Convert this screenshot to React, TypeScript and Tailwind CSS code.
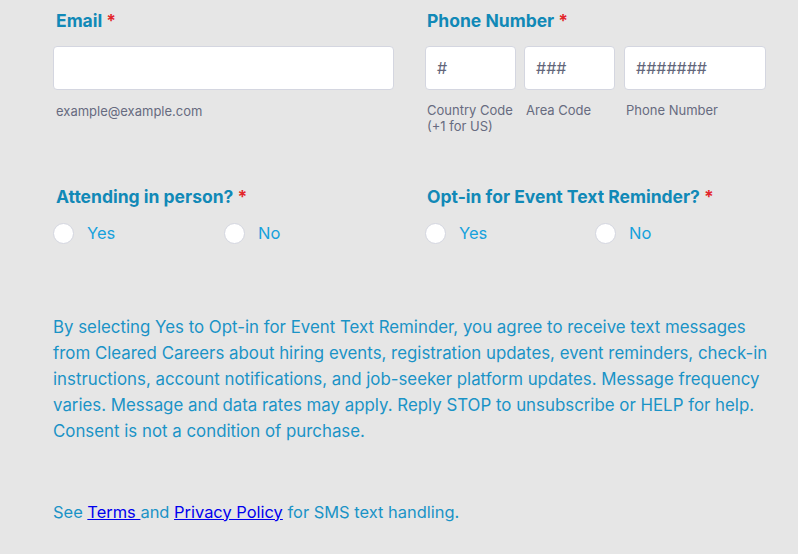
import React from "react";

const labelCls = "text-[17.5px] font-bold text-[#1189b7] leading-none";

function Req() {
    return <span className="text-[#e3262b] ml-1">*</span>;
}

function Radio({ label, width }: { label: string; width: string }) {
    return (
        <label className={`flex items-center gap-[13px] ${width}`}>
            <span className="w-[21px] h-[21px] rounded-full bg-white border border-[#d4d6e0]" />
            <span className="text-[16.5px] text-[#16a1dc]">{label}</span>
        </label>
    );
}

export default function App() {
    return (
        <div
            className="w-[798px] h-[554px] bg-[#e6e6e6] overflow-hidden"
            style={{ fontFamily: "Inter, 'Noto Sans', sans-serif" }}
        >
            <div className="pl-[53px] pt-[12px]">
                <div className="flex">
                    <div className="w-[372px]">
                        <div className={`${labelCls} pl-[3px] h-[16px]`}>
                            Email<Req />
                        </div>
                        <input className="mt-[18px] w-[341px] h-[44px] bg-white rounded-[4px] border border-[#d4d6e0] outline-none" />
                        <div className="mt-[12px] pl-[3px] text-[13px] text-[#676b80]">example@example.com</div>
                    </div>
                    <div>
                        <div className={`${labelCls} pl-[2px] h-[16px]`}>
                            Phone Number<Req />
                        </div>
                        <div className="mt-[18px] flex">
                            <div className="w-[99px]">
                                <div className="w-[91px] h-[44px] bg-white rounded-[4px] border border-[#d4d6e0] flex items-center pl-[11px] text-[16px] text-[#62667a]">#</div>
                                <div className="mt-[12px] pl-[2px] text-[13px] leading-[16px] text-[#676b80]">
                                    Country Code<br />(+1 for US)
                                </div>
                            </div>
                            <div className="w-[100px]">
                                <div className="w-[91px] h-[44px] bg-white rounded-[4px] border border-[#d4d6e0] flex items-center pl-[11px] text-[16px] text-[#62667a]">###</div>
                                <div className="mt-[12px] pl-[2px] text-[13px] leading-[16px] text-[#676b80]">Area Code</div>
                            </div>
                            <div>
                                <div className="w-[142px] h-[44px] bg-white rounded-[4px] border border-[#d4d6e0] flex items-center pl-[11px] text-[16px] text-[#62667a]">#######</div>
                                <div className="mt-[12px] pl-[2px] text-[13px] leading-[16px] text-[#676b80]">Phone Number</div>
                            </div>
                        </div>
                    </div>
                </div>

                <div className="flex mt-[54px]">
                    <div className="w-[372px]">
                        <div className={`${labelCls} pl-[3px] h-[16px]`}>
                            Attending in person?<Req />
                        </div>
                        <div className="flex mt-[17px]">
                            <Radio label="Yes" width="w-[171px]" />
                            <Radio label="No" width="" />
                        </div>
                    </div>
                    <div>
                        <div className={`${labelCls} pl-[2px] h-[16px]`}>
                            Opt-in for Event Text Reminder?<Req />
                        </div>
                        <div className="flex mt-[17px]">
                            <Radio label="Yes" width="w-[170px]" />
                            <Radio label="No" width="" />
                        </div>
                    </div>
                </div>

                <p className="mt-[68px] w-[740px] text-[16.85px] leading-[26px] text-[#1a93c6] whitespace-nowrap">
                    By selecting Yes to Opt-in for Event Text Reminder, you agree to receive text messages
                    <br />
                    from Cleared Careers about hiring events, registration updates, event reminders, check-in
                    <br />
                    instructions, account notifications, and job-seeker platform updates. Message frequency
                    <br />
                    varies. Message and data rates may apply. Reply STOP to unsubscribe or HELP for help.
                    <br />
                    Consent is not a condition of purchase.
                </p>

                <p className="mt-[55px] text-[16.45px] leading-[26px] text-[#1a93c6]">
                    See <a href="#" className="text-[#0000ee] underline">Terms </a>and{" "}
                    <a href="#" className="text-[#0000ee] underline">Privacy Policy</a> for SMS text handling.
                </p>
            </div>
        </div>
    );
}
